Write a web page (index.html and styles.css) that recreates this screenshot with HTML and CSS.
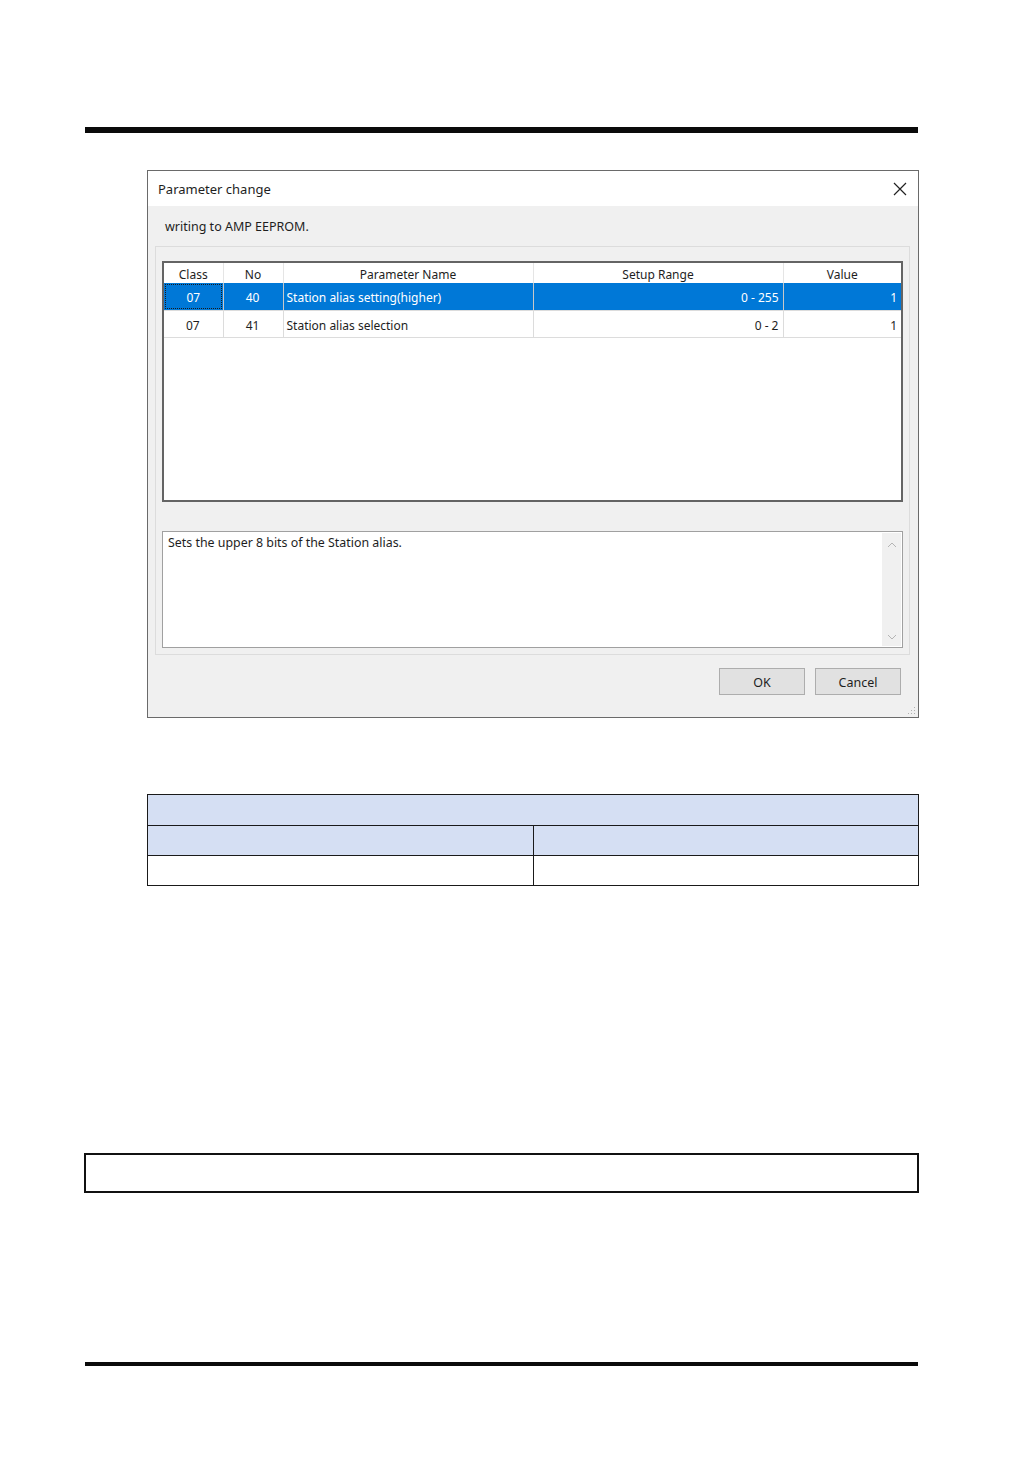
FILE: index.html
```html
<!DOCTYPE html>
<html lang="en">
<head>
    <meta charset="UTF-8" />
    <title>Parameter change</title>
    <link rel="stylesheet" href="styles.css">
</head>
<body>
    <div class="page">
        <div class="rule-top"></div>

        <div class="dialog">
            <div class="titlebar">
                <span class="title">Parameter change</span>
                <svg class="close" width="14" height="14" viewBox="0 0 14 14">
                    <path d="M1 1 L13 13 M13 1 L1 13" stroke="#222" stroke-width="1.2" fill="none" />
                </svg>
            </div>

            <div class="dialog-body">
                <div class="message">writing to AMP EEPROM.</div>

                <div class="group">
                    <div class="list">
                        <table class="params">
                            <colgroup>
                                <col class="c-class">
                                <col class="c-no">
                                <col class="c-name">
                                <col class="c-range">
                                <col class="c-value">
                            </colgroup>
                            <thead>
                                <tr>
                                    <th>Class</th>
                                    <th>No</th>
                                    <th>Parameter Name</th>
                                    <th>Setup Range</th>
                                    <th>Value</th>
                                </tr>
                            </thead>
                            <tbody>
                                <tr class="selected">
                                    <td class="center"><span class="focus">07</span></td>
                                    <td class="center">40</td>
                                    <td>Station alias setting(higher)</td>
                                    <td class="right">0 - 255</td>
                                    <td class="right">1</td>
                                </tr>
                                <tr>
                                    <td class="center">07</td>
                                    <td class="center">41</td>
                                    <td>Station alias selection</td>
                                    <td class="right">0 - 2</td>
                                    <td class="right">1</td>
                                </tr>
                            </tbody>
                        </table>
                    </div>

                    <div class="desc">
                        <div class="desc-text">Sets the upper 8 bits of the Station alias.</div>
                        <div class="scrollbar">
                            <svg width="10" height="6" viewBox="0 0 10 6">
                                <path d="M1 5 L5 1 L9 5" stroke="#b4b4b4" stroke-width="1" fill="none" />
                            </svg>
                            <svg width="10" height="6" viewBox="0 0 10 6">
                                <path d="M1 1 L5 5 L9 1" stroke="#b4b4b4" stroke-width="1" fill="none" />
                            </svg>
                        </div>
                    </div>
                </div>

                <div class="buttons">
                    <button type="button">OK</button>
                    <button type="button">Cancel</button>
                </div>
            </div>

            <svg class="grip" width="10" height="10" viewBox="0 0 10 10">
                <rect x="8" y="2" width="1" height="1" fill="#b0b0b0" />
                <rect x="5" y="5" width="1" height="1" fill="#b0b0b0" />
                <rect x="8" y="5" width="1" height="1" fill="#b0b0b0" />
                <rect x="2" y="8" width="1" height="1" fill="#b0b0b0" />
                <rect x="5" y="8" width="1" height="1" fill="#b0b0b0" />
                <rect x="8" y="8" width="1" height="1" fill="#b0b0b0" />
            </svg>
        </div>

        <table class="spec">
            <tr class="head">
                <td colspan="2"></td>
            </tr>
            <tr class="head">
                <td></td>
                <td></td>
            </tr>
            <tr>
                <td></td>
                <td></td>
            </tr>
        </table>

        <div class="note-box"></div>

        <div class="rule-bottom"></div>
    </div>
</body>
</html>
```

FILE: styles.css
```css
* {
    box-sizing: border-box;
}

body {
    margin: 0;
    background-color: #fff;
    font-family: 'Noto Sans', 'DejaVu Sans', sans-serif;
}

.page {
    width: 1032px;
    height: 1457px;
    padding-top: 127px;
}

.rule-top {
    margin-left: 85px;
    width: 833px;
    height: 6px;
    background-color: #0a0a0a;
}

/* Dialog */
.dialog {
    position: relative;
    margin-top: 37px;
    margin-left: 147px;
    width: 772px;
    height: 548px;
    border: 1px solid #6a6a6a;
    background-color: #f0f0f0;
    display: flex;
    flex-direction: column;
}

.titlebar {
    height: 35px;
    background-color: #fff;
    display: flex;
    align-items: center;
    justify-content: space-between;
    padding: 0 11px 0 10px;
}

.title {
    font-size: 13px;
    color: #1e1e1e;
}

.dialog-body {
    flex: 1;
    padding: 13px 8px 0 7px;
}

.message {
    font-size: 12.5px;
    line-height: 16px;
    height: 16px;
    padding-left: 10px;
    color: #1e1e1e;
}

.group {
    margin-top: 11px;
    height: 409px;
    border: 1px solid #dcdcdc;
    padding: 14px 6px 6px 6px;
}

.list {
    height: 241px;
    border: 2px solid #646464;
    background-color: #fff;
}

.params {
    width: 737px;
    border-collapse: collapse;
    table-layout: fixed;
    font-size: 12px;
    color: #1e1e1e;
}

.c-class { width: 59px; }
.c-no { width: 60px; }
.c-name { width: 250px; }
.c-range { width: 250px; }
.c-value { width: 118px; }

.params th {
    height: 20px;
    padding: 2px 0 0 0;
    font-weight: normal;
    text-align: center;
    border-left: 1px solid #e5e5e5;
}

.params th:first-child,
.params td:first-child {
    border-left: none;
}

.params td {
    height: 27px;
    padding: 2px 4px 0 3px;
    border-left: 1px solid #dcdcdc;
    border-bottom: 1px solid #dcdcdc;
    white-space: nowrap;
}

.params td.center {
    text-align: center;
}

.params td.right {
    text-align: right;
}

.params tr.selected td {
    background-color: #0078d7;
    color: #fff;
    border-left-color: #c8c8c8;
}

.params tr.selected td:first-child {
    padding: 1px;
}

.focus {
    display: flex;
    align-items: center;
    justify-content: center;
    height: 25px;
    padding-top: 2px;
    border: 1px dotted #1a1a1a;
}

.desc {
    margin-top: 29px;
    height: 117px;
    border: 1px solid #a0a0a0;
    background-color: #fff;
    display: flex;
}

.desc-text {
    flex: 1;
    padding: 3px 5px;
    font-size: 12.4px;
    line-height: 16px;
    color: #1e1e1e;
}

.scrollbar {
    width: 19px;
    margin: 1px 1px 1px 0;
    background-color: #f0f0f0;
    display: flex;
    flex-direction: column;
    justify-content: space-between;
    align-items: center;
    padding: 9px 0 6px 0;
}

.buttons {
    margin-top: 13px;
    padding-right: 9px;
    display: flex;
    justify-content: flex-end;
    gap: 10px;
}

.buttons button {
    width: 86px;
    height: 27px;
    border: 1px solid #adadad;
    background-color: #e1e1e1;
    font-family: 'Noto Sans', 'DejaVu Sans', sans-serif;
    font-size: 12.5px;
    color: #1e1e1e;
    padding: 1px 0 0 0;
}

.grip {
    position: absolute;
    right: 2px;
    bottom: 2px;
}

/* Spec table below the dialog */
.spec {
    margin-top: 76px;
    margin-left: 147px;
    width: 772px;
    border-collapse: collapse;
    table-layout: fixed;
}

.spec td {
    height: 30px;
    border: 1.5px solid #1a1a1a;
    padding: 0;
}

.spec tr:first-child td {
    height: 31px;
}

.spec tr.head td {
    background-color: #d5dff3;
}

.spec td:first-child {
    width: 385px;
}

.note-box {
    margin-top: 267px;
    margin-left: 84px;
    width: 835px;
    height: 40px;
    border: 2px solid #111;
}

.rule-bottom {
    margin-top: 169px;
    margin-left: 85px;
    width: 833px;
    height: 4px;
    background-color: #0a0a0a;
}
```
